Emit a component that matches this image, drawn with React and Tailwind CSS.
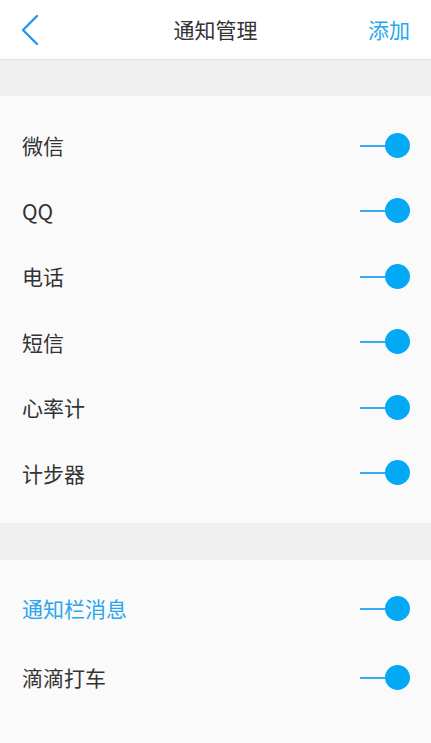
import { useState } from 'react';

const firstGroup = ['微信', 'QQ', '电话', '短信', '心率计', '计步器'];

function Toggle({ on, onClick }) {
    return (
        <button type="button" onClick={onClick} className="relative h-[26px] w-[50px]">
            <span className={`absolute left-0 top-1/2 h-[2px] w-[30px] -translate-y-1/2 ${on ? 'bg-[#39a8f3]' : 'bg-gray-300'}`} />
            <span className={`absolute top-0 h-[25px] w-[25px] rounded-full ${on ? 'right-0 bg-[#03a9f4]' : 'left-0 bg-gray-400'}`} />
        </button>
    );
}

function Row({ label, highlight, height }) {
    const [on, setOn] = useState(true);
    return (
        <div className={`flex items-center justify-between pl-[22px] pr-[21px] ${height}`}>
            <span className={`text-[21px] ${highlight ? 'text-[#2aa6ee]' : 'text-[#333333]'}`}>{label}</span>
            <Toggle on={on} onClick={() => setOn(!on)} />
        </div>
    );
}

export default function App() {
    return (
        <div className="flex min-h-[743px] w-[431px] flex-col bg-[#fafafa] font-['Noto_Sans_CJK_SC',sans-serif]">
            <div className="relative z-10 flex h-[59px] items-center justify-between bg-white pl-[20px] pr-[21px] shadow-[0_1px_2px_rgba(0,0,0,0.06)]">
                <svg width="20" height="32" viewBox="0 0 20 32" fill="none">
                    <path d="M17 2 L3 16 L17 30" stroke="#2196f3" strokeWidth="2.4" strokeLinecap="round" strokeLinejoin="round" />
                </svg>
                <span className="absolute left-1/2 -translate-x-1/2 text-[21px] text-[#333333]">通知管理</span>
                <span className="text-[21px] text-[#2aa6ee]">添加</span>
            </div>

            <div className="h-[37px] bg-[#f0f0f0]" />

            <div className="py-[17px]">
                {firstGroup.map((label) => (
                    <Row key={label} label={label} height="h-[65.5px]" />
                ))}
            </div>

            <div className="h-[37px] bg-[#f0f0f0]" />

            <div className="flex-1 py-[14px]">
                <Row label="通知栏消息" highlight height="h-[69px]" />
                <Row label="滴滴打车" height="h-[69px]" />
            </div>
        </div>
    );
}
